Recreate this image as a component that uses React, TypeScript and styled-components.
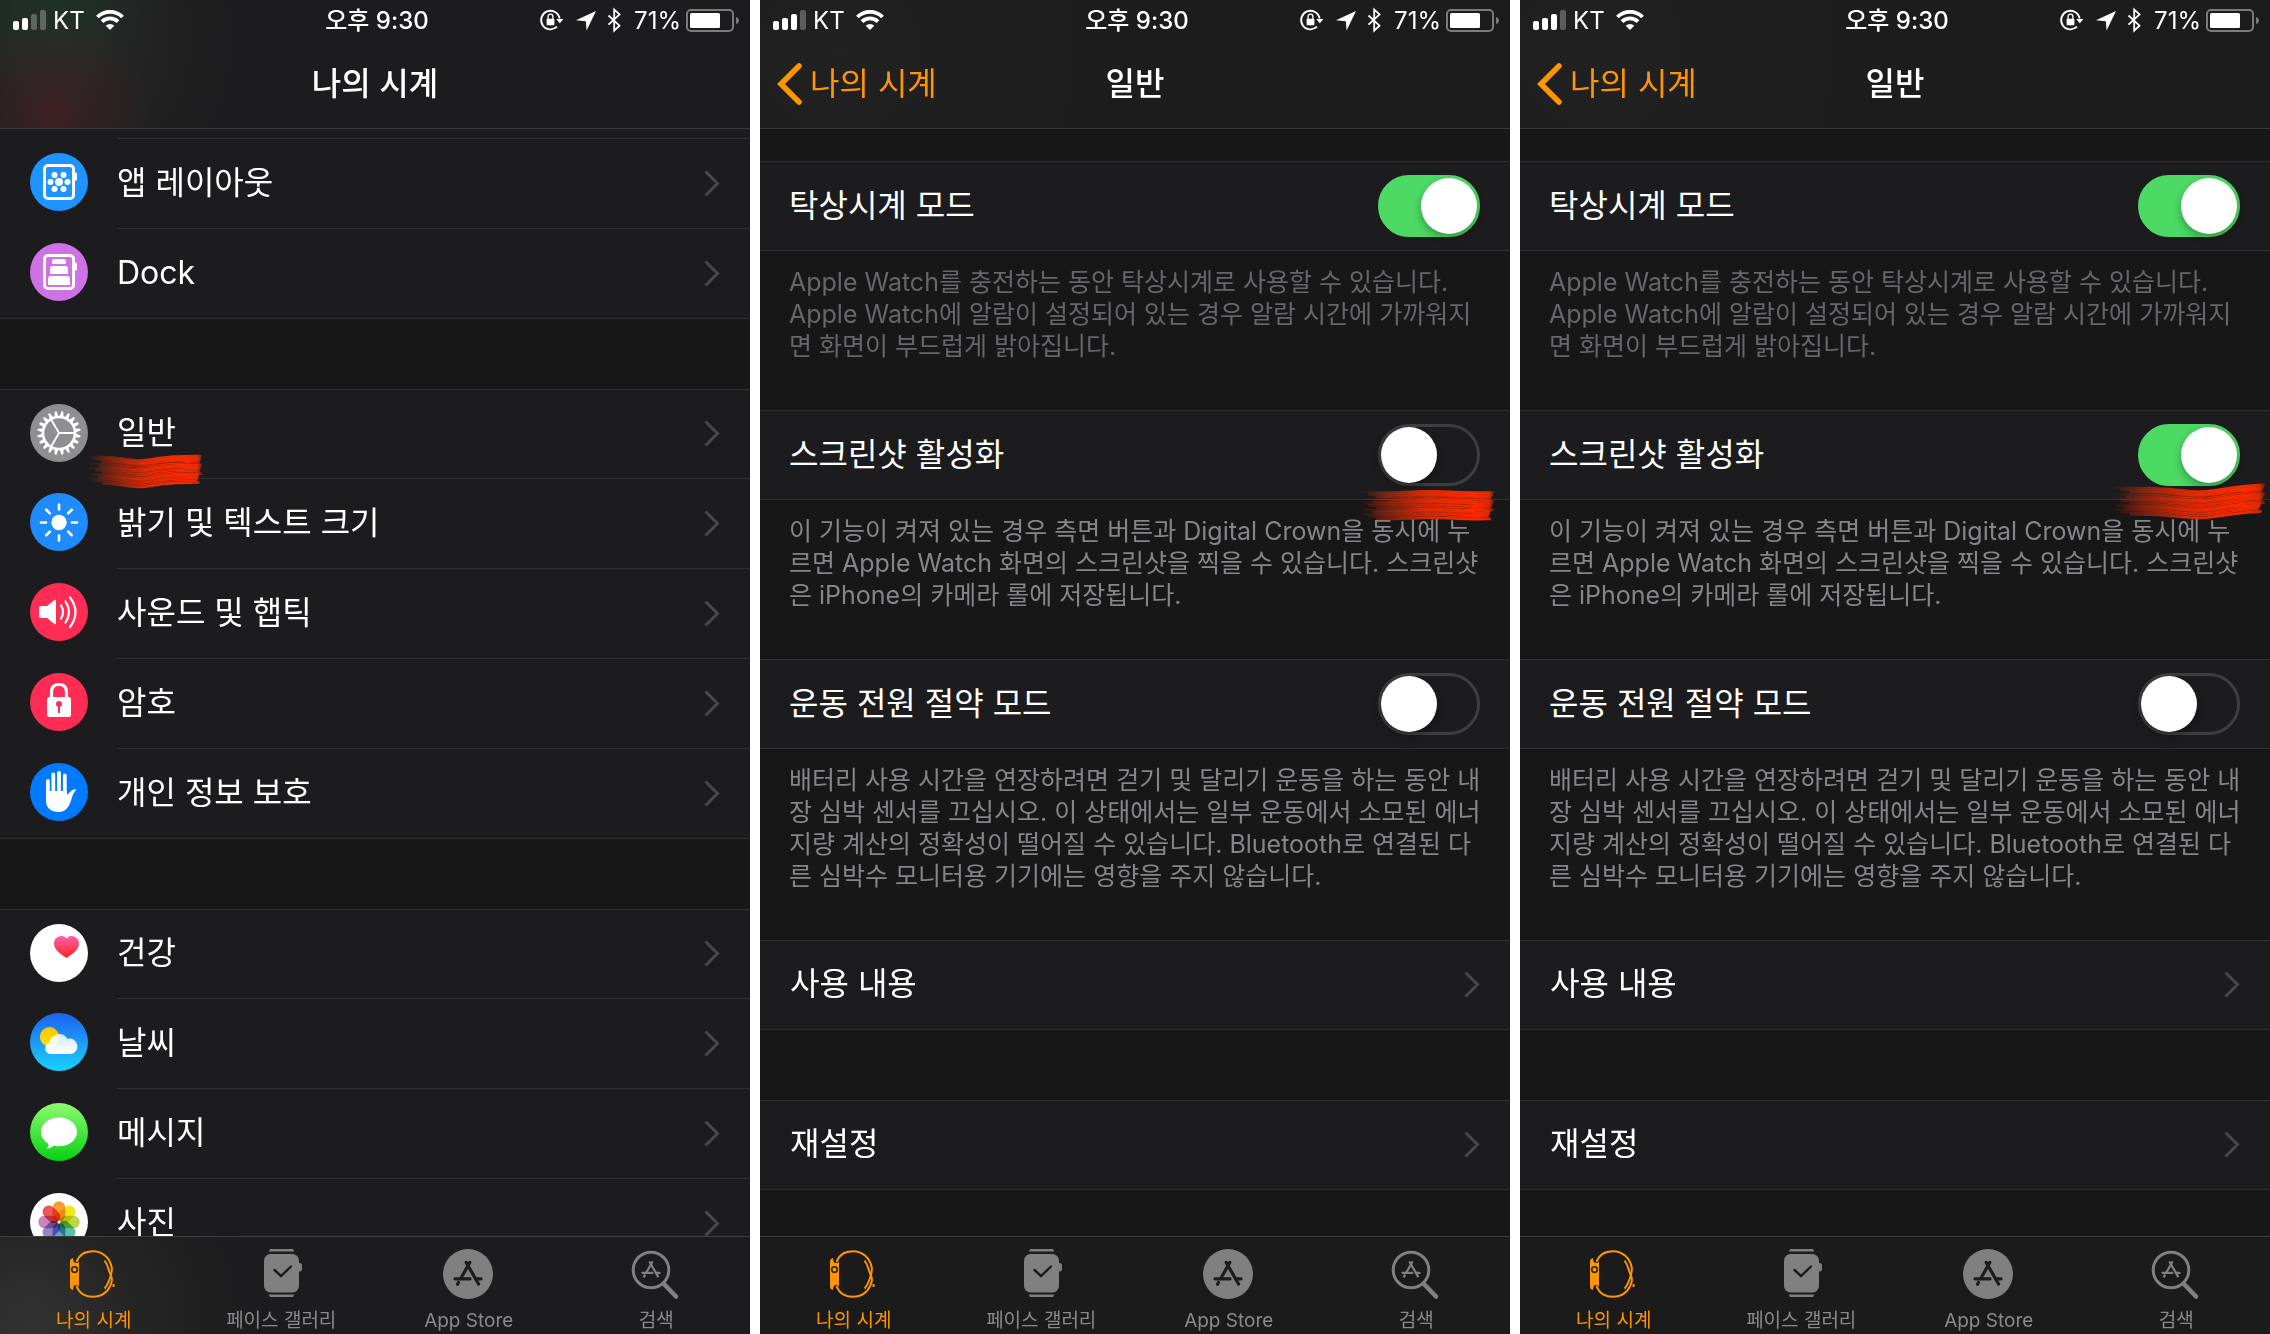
import React from 'react';
import styled, { createGlobalStyle, css } from 'styled-components';

const ORANGE = '#ff9500';
const SANS = `Inter, "Noto Sans CJK KR", sans-serif`;

const GlobalStyle = createGlobalStyle`
  *, *::before, *::after { box-sizing: border-box; }
  body { margin: 0; background: #fff; font-family: ${SANS}; }
  button, input { font: inherit; margin: 0; }
  svg { display: block; flex: none; overflow: visible; }
`;

const Board = styled.main`
  display: grid;
  grid-template-columns: repeat(3, minmax(0, 1fr));
  gap: 10px;
  height: 100vh;
  background: #fff;
`;

const Phone = styled.section`
  display: flex;
  flex-direction: column;
  min-height: 0;
  overflow: hidden;
  background: #171717;
  color: #fff;
`;

const glows = {
  home: css`
    background:
      radial-gradient(circle at 54px 114px, rgba(84, 30, 34, 0.55), rgba(74, 32, 34, 0.3) 45px, transparent 100px),
      radial-gradient(circle at 50px 0, rgba(28, 58, 40, 0.6), transparent 110px),
      radial-gradient(circle at 60px 40px, rgba(50, 50, 48, 0.5), transparent 200px),
      #1c1c1e;
  `,
  detail: css`
    background: radial-gradient(circle at 80px 50px, #212121, #1c1c1d 340px);
  `,
};

const Top = styled.header<{ $glow: 'home' | 'detail' }>`
  flex: none;
  border-bottom: 1px solid #3a3a3c;
  ${(p) => glows[p.$glow]}
`;

const StatusBar = styled.div`
  display: grid;
  grid-template-columns: 1fr auto 1fr;
  align-items: center;
  height: 40px;
  padding: 0 11px 0 13px;
  font-size: 24px;
  line-height: 40px;
`;

const StatusSide = styled.div<{ $end?: boolean }>`
  display: flex;
  align-items: center;
  gap: ${(p) => (p.$end ? '13px' : '7px')};
  justify-content: ${(p) => (p.$end ? 'flex-end' : 'flex-start')};
`;

const StatusText = styled.span`
  padding-top: 2px;
  line-height: 38px;
`;

const Carrier = styled(StatusText)`
  margin-right: 4px;
`;

const Time = styled(StatusText)`
  padding-left: 2px;
  font-weight: 500;
`;

const Charge = styled.span`
  display: flex;
  align-items: center;
  gap: 5px;
`;

const NavBar = styled.div`
  display: grid;
  grid-template-columns: 1fr auto 1fr;
  align-items: center;
  height: 88px;
  padding: 0 17px;
  font-size: 32px;
  line-height: 48px;
`;

const Back = styled.button`
  display: flex;
  align-items: center;
  justify-self: start;
  gap: 7px;
  padding: 0;
  border: 0;
  background: none;
  color: ${ORANGE};
  white-space: nowrap;
`;

const Title = styled.h1`
  grid-column: 2;
  margin: 0;
  font-size: 32px;
  font-weight: 500;
`;

const Scroll = styled.div<{ $pad: number }>`
  flex: 1;
  min-height: 0;
  overflow: hidden;
  padding-top: ${(p) => p.$pad}px;
  ${(p) => p.$pad < 20 && 'background: linear-gradient(#1c1c1e 20px, #171717 20px);'}
`;

const Group = styled.ul<{ $continued?: boolean }>`
  list-style: none;
  margin: 0 0 70px;
  padding: 0;
  background: #1c1c1e;
  border-bottom: 1px solid #303032;
  ${(p) => !p.$continued && 'border-top: 1px solid #303032;'}
`;

const Item = styled.li`
  position: relative;
  &:last-child > * > :last-child {
    border-bottom: 0;
  }
`;

const RowButton = styled.button<{ $height: number }>`
  display: flex;
  align-items: center;
  width: 100%;
  height: ${(p) => p.$height}px;
  padding: 0 0 0 30px;
  border: 0;
  background: none;
  color: inherit;
  text-align: left;
`;

const RowBody = styled.span`
  display: flex;
  align-items: center;
  justify-content: space-between;
  flex: 1;
  height: 100%;
  padding: 0 30px 2px 0;
  border-bottom: 1px solid #303032;
  font-size: 32px;
  line-height: 48px;
`;

const Divider = styled.div`
  height: 1px;
  margin-left: 118px;
  background: #303032;
`;

const IconSlot = styled.span`
  flex: none;
  width: 58px;
  margin-right: 29px;
  padding-bottom: 4px;
`;

const Card = styled.div`
  position: relative;
  display: flex;
  align-items: center;
  justify-content: space-between;
  height: 90px;
  padding: 0 30px 0 29px;
  background: #1c1c1e;
  border: solid #303032;
  border-width: 1px 0;
  font-size: 32px;
  line-height: 48px;
`;

const CardLabel = styled.label`
  padding-bottom: 1px;
`;

const Note = styled.p<{ $dim?: boolean }>`
  margin: 0;
  padding: 15px 29px 48px;
  color: ${(p) => (p.$dim ? '#66666b' : '#85858a')};
  font-size: 25px;
  line-height: 32px;
  white-space: nowrap;
`;

const Switch = styled.input`
  appearance: none;
  position: relative;
  flex: none;
  width: 102px;
  height: 62px;
  border-radius: 31px;
  border: 3px solid #3e3e41;
  background: transparent;
  &::before {
    content: '';
    display: block;
    width: 56px;
    height: 56px;
    border-radius: 50%;
    background: #fff;
    box-shadow: 0 4px 8px rgba(0, 0, 0, 0.3);
  }
  &:checked {
    border-color: #4cd964;
    background: #4cd964;
  }
  &:checked::before {
    margin-left: 40px;
  }
`;

const TabBar = styled.nav<{ $glow: 'home' | 'detail' }>`
  flex: none;
  display: grid;
  grid-template-columns: repeat(4, 1fr);
  height: 98px;
  border-top: 1px solid #3e3e40;
  background: ${(p) =>
    p.$glow === 'home'
      ? 'radial-gradient(circle at 30px 90px, #323232, #242424 110px, #1c1c1e 230px)'
      : '#1b1b1c'};
`;

const Tab = styled.a<{ $on?: boolean }>`
  display: flex;
  flex-direction: column;
  align-items: center;
  padding-top: 12px;
  gap: 8px;
  color: ${(p) => (p.$on ? ORANGE : '#8a8a8c')};
  font-size: 19px;
  line-height: 28px;
  text-decoration: none;
`;

const Scribble = styled.svg<{ $left?: number; $right?: number; $top: number }>`
  position: absolute;
  z-index: 1;
  top: ${(p) => p.$top}px;
  ${(p) => (p.$left !== undefined ? `left: ${p.$left}px;` : `right: ${p.$right}px;`)}
  pointer-events: none;
`;

/* ---------- status bar ---------- */

const Signal = ({ bars }: { bars: number }) => (
  <svg width="33" height="20" viewBox="0 0 33 20" fill="#fff">
    {[9, 12, 16, 20].map((h, i) => (
      <rect key={h} x={i * 9} y={20 - h} width="6" height={h} rx="2" opacity={i < bars ? 1 : 0.27} />
    ))}
  </svg>
);

const Wifi = () => (
  <svg width="28" height="20" viewBox="0 0 28 20" fill="none" stroke="#fff" strokeWidth="3.8">
    <path d="M1.4 7a18 18 0 0 1 25.2 0" />
    <path d="M6 11.7a11.5 11.5 0 0 1 16 0" />
    <path d="M14 20l-4.3-4.3a6.2 6.2 0 0 1 8.6 0z" fill="#fff" stroke="none" />
  </svg>
);

const StatusIcons = () => (
  <svg width="81" height="24" viewBox="0 0 81 24" fill="#fff">
    <path d="M19.600 10.500A9.300 9.300 0 1 0 17 18.700" fill="none" stroke="#fff" strokeWidth="1.900" />
    <path d="M16.200 11h7.200l-3.600 4.300z" />
    <rect x="6.600" y="10.800" width="7.800" height="6.400" rx="0.800" />
    <path d="M8.100 11V8.700a2.400 2.500 0 0 1 4.800 0V11" fill="none" stroke="#fff" strokeWidth="1.300" />
    <path d="M56 3L46.600 22.500 45.800 13.200 36 12.200z" />
    <path d="M68.500 7.500l11 10.200-5.300 5V1.600l5.300 4.800-11 10.200" fill="none" stroke="#fff" strokeWidth="1.800" />
  </svg>
);

const Battery = () => (
  <svg width="53" height="23" viewBox="0 0 53 23">
    <rect x="1" y="1" width="46" height="21" rx="4" fill="none" stroke="#7b7b7d" strokeWidth="2" />
    <rect x="4" y="4" width="30" height="15" rx="1.500" fill="#fff" />
    <path d="M50 8q3 1 3 3.500T50 15z" fill="#7b7b7d" />
  </svg>
);

const BackArrow = () => (
  <svg width="26" height="42" viewBox="0 0 26 42" fill="none" stroke={ORANGE} strokeWidth="5.600" strokeLinecap="round" strokeLinejoin="miter">
    <path d="M22 3L4 21l18 18" />
  </svg>
);

const Chevron = () => (
  <svg width="17" height="26" viewBox="0 0 17 26" fill="none" stroke="#48484b" strokeWidth="3">
    <path d="M2.500 1.500L14.500 13.500 2.500 25.500" />
  </svg>
);

/* ---------- list icons ---------- */

const Disc = ({ fill, children }: { fill: string; children: React.ReactNode }) => (
  <svg width="58" height="58" viewBox="0 0 58 58">
    <circle cx="29" cy="29" r="29" fill={fill} />
    {children}
  </svg>
);

const WatchOutline = () => (
  <>
    <rect x="14.500" y="12.500" width="29" height="33" rx="3.500" fill="none" stroke="#fff" strokeWidth="3" />
    <path d="M44.500 19.500h1.200q1.300 0 1.300 1.500v5q0 1.500-1.300 1.500h-1.200z" fill="#fff" />
  </>
);

const LayoutIcon = () => (
  <Disc fill="#1f93ff">
    <WatchOutline />
    <g fill="#fff">
      <circle cx="29" cy="29" r="4" />
      {[[24.5, 22], [33.5, 22], [20.5, 29], [37.5, 29], [24.5, 36], [33.5, 36]].map(([x, y]) => (
        <circle key={`${x}-${y}`} cx={x} cy={y} r="3" />
      ))}
    </g>
  </Disc>
);

const DockIcon = () => (
  <Disc fill="#cf72e6">
    <WatchOutline />
    <g fill="#fff">
      <path d="M22 21v-2.500q0-2.500 2.500-2.500h9q2.500 0 2.500 2.500V21z" />
      <path d="M20 31v-5q0-3 3-3h12q3 0 3 3v5z" />
      <path d="M18 42v-6q0-3 3-3h16q3 0 3 3v6z" />
    </g>
  </Disc>
);

const GearIcon = () => (
  <Disc fill="#8e8e93">
    <g fill="#fff">
      {Array.from({ length: 20 }, (_, i) => (
        <path key={i} d="M27 12.500L28 7.500Q29 6.600 30 7.500L31 12.500z" transform={`rotate(${i * 18 + 9} 29 29)`} />
      ))}
    </g>
    <circle cx="29" cy="29" r="16" fill="none" stroke="#fff" strokeWidth="2.600" />
    <path d="M29 29h16M29 29l-8-13.800M29 29l-8 13.800" stroke="#fff" strokeWidth="1.800" />
  </Disc>
);

const SunIcon = () => (
  <Disc fill="#1f8bff">
    <circle cx="29" cy="29.500" r="7.700" fill="#fff" />
    <g stroke="#fff" strokeWidth="2.600" strokeLinecap="round">
      {Array.from({ length: 8 }, (_, i) => (
        <path key={i} d="M29 11.500v5" transform={`rotate(${i * 45} 29 29.500)`} />
      ))}
    </g>
  </Disc>
);

const SoundIcon = () => (
  <Disc fill="#ff2d55">
    <path d="M9 25q0-2 2-2h6l7.500-6q1.500-.8 1.500 1v22q0 1.800-1.500 1l-7.500-6h-6q-2 0-2-2z" fill="#fff" />
    <g fill="none" stroke="#fff" strokeWidth="2.200" strokeLinecap="round">
      <path d="M31 22.500q4 6.500 0 13" />
      <path d="M35.500 18.500q7 10.500 0 21" />
      <path d="M40 14.500q11 14.500 0 29.500" />
    </g>
  </Disc>
);

const LockIcon = () => (
  <Disc fill="#ff2d55">
    <path d="M21.500 25v-6q0-7.500 7.500-7.500t7.500 7.500v6" fill="none" stroke="#fff" strokeWidth="3.200" />
    <rect x="17" y="24" width="24" height="20" rx="2.500" fill="#fff" />
    <circle cx="29" cy="31" r="3" fill="#ff2d55" />
    <path d="M28 32h2v8h-2z" fill="#ff2d55" />
  </Disc>
);

const HandIcon = () => (
  <Disc fill="#007aff">
    <g stroke="#fff" strokeLinecap="round" strokeWidth="3.800">
      <path d="M17.900 18v14M23.300 11.500V32M29 10v22M34.800 12.500V32" />
    </g>
    <path d="M16 28h21v4l4-4q2.500-2.500 5.500-1.500-2.500 2-4.500 7.500Q38.500 49 29 49 16 49 16 37z" fill="#fff" />
  </Disc>
);

const HealthIcon = () => (
  <Disc fill="#fff">
    <defs>
      <linearGradient id="heart" x1="0" y1="0" x2="0" y2="1">
        <stop offset="0" stopColor="#ff5fb0" />
        <stop offset="1" stopColor="#ff2419" />
      </linearGradient>
    </defs>
    <path d="M36.500 34C31 30.500 24 26 24 19.300 24 12.500 33 9.500 36.500 14.500 40 9.500 49 12.500 49 19.300 49 26 42 30.500 36.500 34z" fill="url(#heart)" />
  </Disc>
);

const WeatherIcon = () => (
  <Disc fill="url(#sky)">
    <defs>
      <linearGradient id="sky" x1="0" y1="0" x2="0" y2="1">
        <stop offset="0" stopColor="#1d62f0" />
        <stop offset="1" stopColor="#1ad2fd" />
      </linearGradient>
      <linearGradient id="sun" x1="0" y1="0" x2="0" y2="1">
        <stop offset="0" stopColor="#ffc200" />
        <stop offset="1" stopColor="#ffe600" />
      </linearGradient>
      <linearGradient id="cloud" x1="0" y1="0" x2="0" y2="1">
        <stop offset="0" stopColor="#fff" stopOpacity="0.800" />
        <stop offset="1" stopColor="#fff" />
      </linearGradient>
    </defs>
    <circle cx="19.500" cy="23.700" r="9.600" fill="url(#sun)" />
    <path d="M20.500 41a5.500 5.500 0 0 1-1.200-10.800A9.800 9.800 0 0 1 37.500 26 7.700 7.700 0 1 1 39 41z" fill="url(#cloud)" />
  </Disc>
);

const MessageIcon = () => (
  <Disc fill="url(#bubble)">
    <defs>
      <linearGradient id="bubble" x1="0" y1="0" x2="0" y2="1">
        <stop offset="0" stopColor="#8cfb70" />
        <stop offset="1" stopColor="#08d013" />
      </linearGradient>
    </defs>
    <path d="M29 14.500c10 0 18 6.400 18 14.400s-8 14.400-18 14.400q-2.800 0-5.300-.6-3 2.800-7.500 3.300 2.600-2.200 2.500-5.300C14 38 11 33.700 11 28.900c0-8 8-14.400 18-14.400z" fill="#fff" />
  </Disc>
);

const PETALS = ['#f7941e', '#f2e205', '#b5d334', '#4db89a', '#5f8fcf', '#8a78c0', '#c678b4', '#ee4540'];

const Petal = styled.rect`
  mix-blend-mode: multiply;
`;

const Flower = styled.g`
  isolation: isolate;
`;

const PhotosIcon = () => (
  <Disc fill="#fff">
    <Flower>
      {PETALS.map((c, i) => (
        <Petal key={c} x="22.700" y="8.300" width="12.600" height="20" rx="6.300" fill={c} fillOpacity="0.900" transform={`rotate(${i * 45} 29 29)`} />
      ))}
    </Flower>
    <circle cx="29" cy="29" r="1.500" fill="#fff" />
  </Disc>
);

/* ---------- tab icons ---------- */

const Sticks = () => (
  <g fill="none" strokeLinecap="round">
    <path d="M26.800 13.500L18 29" />
    <path d="M15.500 33.500l-1 1.800" />
    <path d="M23.200 13.500L35.500 35" />
    <path d="M12 29.800h15M33 29.800h5" />
  </g>
);

const WatchTab = () => (
  <svg width="50" height="50" viewBox="2 0 50 50" fill="none" stroke="currentColor" strokeWidth="2">
    <path d="M9.500 13C12 6 18 2.200 26 2.200c9.500 0 17 7 18.700 16.300.7 4-.4 7-1.700 10.500-1.500 4-2.500 7.500-5.500 10.500" />
    <path d="M9.500 37c2.500 7 8.500 10.800 16.500 10.800 9.500 0 16.500-6 18.700-15.300.6-2.700 0-4.700-1.200-7-2-3.800-2-9-6-14" />
    <path d="M46.500 35v3" />
    <path d="M3 12.500q0-3 3-3.500 0 5 3 5 2 0 3-1.500v25q-1-1.500-3-1.500-3 0-3 5-3-.5-3-3.500z" fill="currentColor" stroke="none" />
    <circle cx="7.500" cy="20.500" r="2.800" stroke="#242425" strokeWidth="1.600" />
  </svg>
);

const FaceTab = () => (
  <svg width="50" height="50" viewBox="0 0 50 50" fill="#808080">
    <path d="M14 0h23l1.200 2.500H12.800zM12.800 45.500h25.400L37 48H14z" />
    <rect x="8" y="5" width="35" height="38.500" rx="6.500" />
    <rect x="41" y="14" width="5" height="8.500" rx="2.500" />
    <path d="M18.500 21l6.500 6 10-9.500" fill="none" stroke="#1c1c1e" strokeWidth="2.400" strokeLinecap="round" />
  </svg>
);

const StoreTab = () => (
  <svg width="50" height="50" viewBox="1 0 50 50">
    <circle cx="25" cy="25" r="25" fill="#808080" />
    <g stroke="#1c1c1e" strokeWidth="3.200">
      <Sticks />
    </g>
  </svg>
);

const SearchTab = () => (
  <svg width="50" height="50" viewBox="1 0 50 50" fill="none" stroke="#808080">
    <circle cx="21" cy="21" r="17.800" strokeWidth="3" />
    <path d="M34 35l12 12.500" strokeWidth="4.600" strokeLinecap="round" />
    <g strokeWidth="3.400" transform="translate(4.500 4.300) scale(0.660)">
      <Sticks />
    </g>
  </svg>
);

/* ---------- red brush marks ---------- */

type Wave = (t: number) => number;

const streak = (w: number, y: number, wave: Wave, x0: number, x1: number) => {
  const pts: string[] = [];
  for (let i = 0; i <= 24; i++) {
    const t = x0 + ((x1 - x0) * i) / 24;
    pts.push(`${(t * w).toFixed(1)} ${(y + wave(t)).toFixed(1)}`);
  }
  return `M${pts.join('L')}`;
};

const Brush = ({ id, width, wave, ...place }: { id: string; width: number; wave: Wave; $left?: number; $right?: number; $top: number }) => (
  <Scribble width={width} height="42" viewBox={`0 0 ${width} 42`} fill="none" aria-hidden="true" {...place}>
    <defs>
      <linearGradient id={id} gradientUnits="userSpaceOnUse" x1="0" y1="0" x2={width} y2="0">
        <stop offset="0" stopColor="#e02c08" stopOpacity="0" />
        <stop offset="0.200" stopColor="#e02c08" stopOpacity="0.450" />
        <stop offset="0.500" stopColor="#ee2c04" stopOpacity="0.900" />
        <stop offset="0.850" stopColor="#fb2b00" />
        <stop offset="0.960" stopColor="#f42b00" stopOpacity="0.900" />
        <stop offset="1" stopColor="#f42b00" stopOpacity="0.300" />
      </linearGradient>
    </defs>
    {Array.from({ length: 13 }, (_, i) => (
      <path
        key={i}
        d={streak(width, 7 + i * 2.2, wave, 0.03 * ((i * 7) % 5), 1 - 0.007 * ((i * 5) % 4) - (i > 8 ? 0.02 : 0))}
        stroke={`url(#${id})`}
        strokeWidth={i % 4 === 3 ? 1.6 : 2.7}
      />
    ))}
    {[2, 5, 9].map((i) => (
      <path key={`d${i}`} d={streak(width, 8 + i * 2.2, wave, 0.1, 0.85)} stroke="#7a1c08" strokeOpacity="0.400" strokeWidth="1" />
    ))}
  </Scribble>
);

const bendLow: Wave = (t) => 3.5 * Math.exp(-(((t - 0.45) / 0.18) ** 2)) - 2 * Math.max(0, t - 0.5);
const flat: Wave = (t) => Math.sin(t * 9) * 0.7;
const bendRise: Wave = (t) => 3.5 * Math.exp(-(((t - 0.58) / 0.2) ** 2)) - 8 * Math.max(0, t - 0.6);

/* ---------- screen parts ---------- */

const Header = ({ bars, title, back }: { bars: number; title: string; back?: string }) => (
  <Top $glow={back ? 'detail' : 'home'}>
    <StatusBar>
      <StatusSide>
        <Signal bars={bars} />
        <Carrier>KT</Carrier>
        <Wifi />
      </StatusSide>
      <Time as="time">오후 9:30</Time>
      <StatusSide $end>
        <StatusIcons />
        <Charge>
          <StatusText>71%</StatusText>
          <Battery />
        </Charge>
      </StatusSide>
    </StatusBar>
    <NavBar>
      {back && (
        <Back type="button">
          <BackArrow />
          {back}
        </Back>
      )}
      <Title>{title}</Title>
    </NavBar>
  </Top>
);

const Tabs = ({ glow }: { glow: 'home' | 'detail' }) => (
  <TabBar $glow={glow}>
    <Tab href="#watch" $on><WatchTab />나의 시계</Tab>
    <Tab href="#faces"><FaceTab />페이스 갤러리</Tab>
    <Tab href="#store"><StoreTab />App Store</Tab>
    <Tab href="#search"><SearchTab />검색</Tab>
  </TabBar>
);

const MenuItem = ({ icon, label, first, mark }: { icon?: React.ReactNode; label: string; first?: boolean; mark?: React.ReactNode }) => (
  <Item>
    <RowButton type="button" $height={first ? 89 : 90}>
      {icon && <IconSlot>{icon}</IconSlot>}
      <RowBody>
        {label}
        <Chevron />
      </RowBody>
    </RowButton>
    {mark}
  </Item>
);

const PlainItem = ({ label }: { label: string }) => (
  <Item>
    <RowButton type="button" $height={88}>
      <RowBody>
        {label}
        <Chevron />
      </RowBody>
    </RowButton>
  </Item>
);

const SwitchCard = ({ id, label, on, mark }: { id: string; label: string; on?: boolean; mark?: React.ReactNode }) => (
  <Card>
    <CardLabel htmlFor={id}>{label}</CardLabel>
    <Switch id={id} type="checkbox" defaultChecked={on} />
    {mark}
  </Card>
);

const HomeScreen = () => (
  <Phone>
    <Header bars={2} title="나의 시계" />
    <Scroll $pad={9}>
      <Group $continued>
        <Item role="presentation"><Divider /></Item>
        <MenuItem icon={<LayoutIcon />} label="앱 레이아웃" />
        <MenuItem icon={<DockIcon />} label="Dock" first />
      </Group>
      <Group>
        <MenuItem first icon={<GearIcon />} label="일반" mark={<Brush id="brush-a" width={114} wave={bendLow} $left={88} $top={60} />} />
        <MenuItem icon={<SunIcon />} label="밝기 및 텍스트 크기" />
        <MenuItem icon={<SoundIcon />} label="사운드 및 햅틱" />
        <MenuItem icon={<LockIcon />} label="암호" />
        <MenuItem first icon={<HandIcon />} label="개인 정보 보호" />
      </Group>
      <Group>
        <MenuItem first icon={<HealthIcon />} label="건강" />
        <MenuItem icon={<WeatherIcon />} label="날씨" />
        <MenuItem icon={<MessageIcon />} label="메시지" />
        <MenuItem icon={<PhotosIcon />} label="사진" />
      </Group>
    </Scroll>
    <Tabs glow="home" />
  </Phone>
);

const GeneralScreen = ({ name, captured, mark }: { name: string; captured: boolean; mark: React.ReactNode }) => (
  <Phone>
    <Header bars={3} title="일반" back="나의 시계" />
    <Scroll $pad={32}>
      <SwitchCard id={`${name}-nightstand`} label="탁상시계 모드" on />
      <Note $dim>
        Apple Watch를 충전하는 동안 탁상시계로 사용할 수 있습니다.<br />
        Apple Watch에 알람이 설정되어 있는 경우 알람 시간에 가까워지<br />
        면 화면이 부드럽게 밝아집니다.
      </Note>
      <SwitchCard id={`${name}-capture`} label="스크린샷 활성화" on={captured} mark={mark} />
      <Note>
        이 기능이 켜져 있는 경우 측면 버튼과 Digital Crown을 동시에 누<br />
        르면 Apple Watch 화면의 스크린샷을 찍을 수 있습니다. 스크린샷<br />
        은 iPhone의 카메라 롤에 저장됩니다.
      </Note>
      <SwitchCard id={`${name}-power`} label="운동 전원 절약 모드" />
      <Note>
        배터리 사용 시간을 연장하려면 걷기 및 달리기 운동을 하는 동안 내<br />
        장 심박 센서를 끄십시오. 이 상태에서는 일부 운동에서 소모된 에너<br />
        지량 계산의 정확성이 떨어질 수 있습니다. Bluetooth로 연결된 다<br />
        른 심박수 모니터용 기기에는 영향을 주지 않습니다.
      </Note>
      <Group><PlainItem label="사용 내용" /></Group>
      <Group><PlainItem label="재설정" /></Group>
    </Scroll>
    <Tabs glow="detail" />
  </Phone>
);

export default function App() {
  return (
    <>
      <GlobalStyle />
      <Board>
        <HomeScreen />
        <GeneralScreen name="before" captured={false} mark={<Brush id="brush-b" width={134} wave={flat} $right={16} $top={74} />} />
        <GeneralScreen name="after" captured mark={<Brush id="brush-c" width={154} wave={bendRise} $right={5} $top={70} />} />
      </Board>
    </>
  );
}
